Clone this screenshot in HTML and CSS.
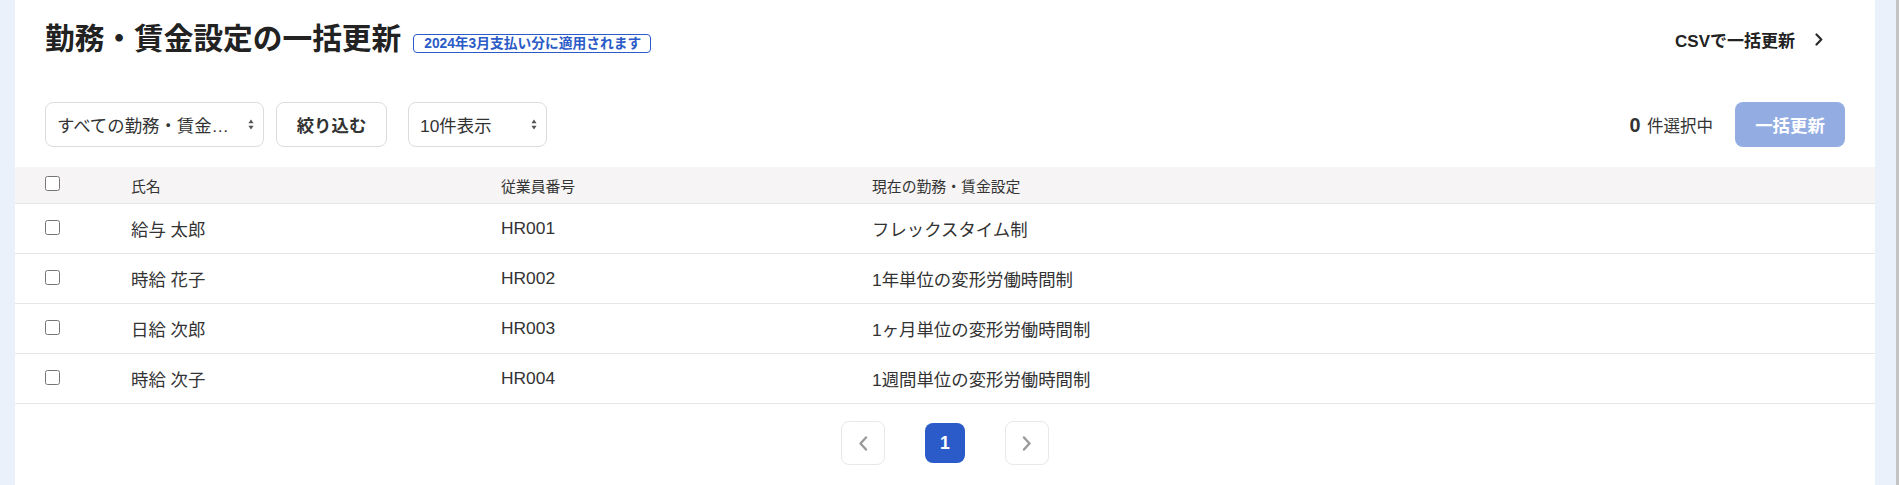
FILE: index.html
```html
<!DOCTYPE html>
<html lang="ja">
<head>
<meta charset="utf-8">
<title>勤務・賃金設定の一括更新</title>
<link rel="stylesheet" href="styles.css">
</head>
<body>
<div class="page">
  <main class="panel">
    <header class="head">
      <div class="title-wrap">
        <h1 class="title">勤務・賃金設定の一括更新</h1>
        <span class="badge">2024年3月支払い分に適用されます</span>
      </div>
      <a class="csv-link" href="#"><span class="csv-text">CSVで一括更新</span><svg class="csv-chevron" width="8" height="13" viewBox="0 0 8 13"><path d="M1.5 1.5 L6.3 6.5 L1.5 11.5" fill="none" stroke="#2b2b2b" stroke-width="2.2" stroke-linecap="round" stroke-linejoin="round"/></svg></a>
    </header>

    <div class="toolbar">
      <div class="filters">
        <div class="select select-wide">
          <span class="select-text">すべての勤務・賃金設定</span>
          <svg class="select-arrow" width="6" height="11" viewBox="0 0 6 11"><path d="M3 0.5 L5.6 4.2 H0.4 Z M3 10.5 L5.6 6.8 H0.4 Z" fill="#555"/></svg>
        </div>
        <button class="btn-filter" type="button">絞り込む</button>
        <div class="select select-count">
          <span class="select-text">10件表示</span>
          <svg class="select-arrow" width="6" height="11" viewBox="0 0 6 11"><path d="M3 0.5 L5.6 4.2 H0.4 Z M3 10.5 L5.6 6.8 H0.4 Z" fill="#555"/></svg>
        </div>
      </div>
      <div class="actions">
        <span class="count"><b>0</b> 件選択中</span>
        <button class="btn-bulk" type="button" disabled>一括更新</button>
      </div>
    </div>

    <div class="table">
      <div class="table-row th">
        <div class="cell cell-check"><input type="checkbox"></div>
        <div class="cell">氏名</div>
        <div class="cell">従業員番号</div>
        <div class="cell">現在の勤務・賃金設定</div>
      </div>
      <div class="table-row">
        <div class="cell cell-check"><input type="checkbox"></div>
        <div class="cell">給与 太郎</div>
        <div class="cell">HR001</div>
        <div class="cell">フレックスタイム制</div>
      </div>
      <div class="table-row">
        <div class="cell cell-check"><input type="checkbox"></div>
        <div class="cell">時給 花子</div>
        <div class="cell">HR002</div>
        <div class="cell">1年単位の変形労働時間制</div>
      </div>
      <div class="table-row">
        <div class="cell cell-check"><input type="checkbox"></div>
        <div class="cell">日給 次郎</div>
        <div class="cell">HR003</div>
        <div class="cell">1ヶ月単位の変形労働時間制</div>
      </div>
      <div class="table-row">
        <div class="cell cell-check"><input type="checkbox"></div>
        <div class="cell">時給 次子</div>
        <div class="cell">HR004</div>
        <div class="cell">1週間単位の変形労働時間制</div>
      </div>
    </div>

    <nav class="pager">
      <button class="pg-btn" type="button" aria-label="前へ">
        <svg width="10" height="15" viewBox="0 0 10 15"><path d="M8 1.5 L2.5 7.5 L8 13.5" fill="none" stroke="#9a9a9a" stroke-width="2.4" stroke-linecap="round" stroke-linejoin="round"/></svg>
      </button>
      <button class="pg-current" type="button">1</button>
      <button class="pg-btn" type="button" aria-label="次へ">
        <svg width="10" height="15" viewBox="0 0 10 15"><path d="M2 1.5 L7.5 7.5 L2 13.5" fill="none" stroke="#9a9a9a" stroke-width="2.4" stroke-linecap="round" stroke-linejoin="round"/></svg>
      </button>
    </nav>
  </main>
</div>
</body>
</html>
```

FILE: styles.css
```css
* { box-sizing: border-box; }
html, body { margin: 0; padding: 0; }
body {
  font-family: "Liberation Sans", "Noto Sans CJK JP", sans-serif;
  color: #333;
  background: #eaf1fb;
}
.page {
  min-height: 100vh;
  padding: 0 21px 0 15px;
  border-right: 3px solid #c4c4c4;
}
.panel {
  background: #fff;
  min-height: 100vh;
  padding-bottom: 20px;
}

/* header */
.head {
  display: flex;
  align-items: center;
  justify-content: space-between;
  padding: 24px 30px 0;
}
.title-wrap {
  display: flex;
  align-items: center;
  gap: 12px;
}
.title {
  margin: 0;
  font-size: 29.7px;
  line-height: 30px;
  font-weight: 700;
  color: #222;
}
.badge {
  margin-top: 8px;
  border: 1px solid #2a5bc8;
  border-radius: 4px;
  color: #2a5bc8;
  font-size: 13.75px;
  font-weight: 700;
  line-height: 17px;
  padding: 0 9px 0 10px;
  white-space: nowrap;
}
.csv-link {
  display: flex;
  align-items: center;
  gap: 20px;
  padding-right: 22px;
  font-size: 17px;
  font-weight: 700;
  color: #222;
  text-decoration: none;
}
.csv-text { white-space: nowrap; }
.csv-chevron { flex: none; }

/* toolbar */
.toolbar {
  display: flex;
  justify-content: space-between;
  align-items: center;
  height: 45px;
  margin: 48px 30px 20px;
}
.filters {
  display: flex;
  align-items: center;
}
.select {
  display: flex;
  align-items: center;
  height: 45px;
  border: 1px solid #dcdcdc;
  border-radius: 8px;
  padding: 0 9px 0 11px;
  font-size: 17.4px;
  color: #333;
  background: #fff;
}
.select-wide { width: 219px; }
.select-count { width: 139px; margin-left: 21px; }
.select-text {
  white-space: nowrap;
  overflow: hidden;
  text-overflow: ellipsis;
}
.select-wide .select-text { width: 182px; }
.select-arrow { margin-left: auto; flex: none; }
.btn-filter {
  margin-left: 12px;
  width: 111px;
  height: 45px;
  border: 1px solid #dcdcdc;
  border-radius: 8px;
  background: #fff;
  font-family: inherit;
  font-size: 17.4px;
  font-weight: 700;
  color: #333;
  padding: 0;
}
.actions {
  display: flex;
  align-items: center;
  gap: 22px;
}
.count {
  font-size: 16.5px;
  color: #333;
}
.count b {
  font-size: 19.8px;
  margin-right: 2px;
}
.btn-bulk {
  width: 110px;
  height: 45px;
  border: 0;
  border-radius: 8px;
  background: #93ade3;
  color: #fff;
  font-family: inherit;
  font-size: 17.4px;
  font-weight: 700;
  padding: 0;
}

/* table */
.table-row {
  display: grid;
  grid-template-columns: 116px 370px 371px 1fr;
  align-items: center;
  height: 50px;
  border-bottom: 1px solid #e6e6e6;
  font-size: 17.4px;
  color: #333;
}
.table-row.th {
  height: 37px;
  background: #f6f4f4;
  font-size: 14.85px;
}
.cell { white-space: nowrap; }
.cell-check {
  display: flex;
  align-items: center;
  padding-left: 30px;
}
.cell-check input {
  width: 15px;
  height: 15px;
  margin: 0 0 3px 0;
}

/* pager */
.pager {
  display: flex;
  justify-content: center;
  align-items: center;
  gap: 40px;
  padding-top: 17px;
}
.pg-btn {
  width: 44px;
  height: 44px;
  border: 1px solid #e8e8e8;
  border-radius: 8px;
  background: #fff;
  display: flex;
  align-items: center;
  justify-content: center;
  padding: 0;
}
.pg-current {
  width: 40px;
  height: 40px;
  border: 0;
  border-radius: 8px;
  background: #2a5bc8;
  color: #fff;
  font-family: inherit;
  font-size: 17.6px;
  font-weight: 700;
  padding: 0;
}
```
